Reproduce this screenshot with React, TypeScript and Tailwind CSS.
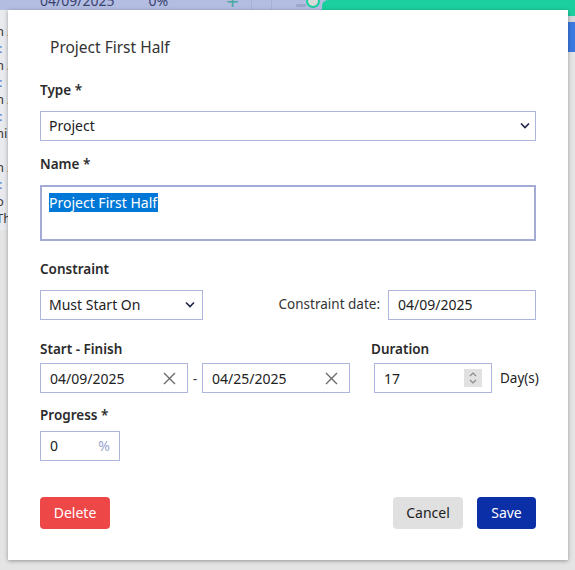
import React from 'react';

const font = { fontFamily: '"Segoe UI", "Noto Sans", "Open Sans", sans-serif' };

const Chevron = () => (
    <svg width="10" height="7" viewBox="0 0 10 7" className="shrink-0">
        <path d="M1 1.5 L5 5.5 L9 1.5" fill="none" stroke="#1f2547" strokeWidth="1.6" />
    </svg>
);

const Clear = () => (
    <svg width="13" height="13" viewBox="0 0 13 13" className="shrink-0">
        <path d="M1 1 L12 12 M12 1 L1 12" fill="none" stroke="#6b6b6b" strokeWidth="1.4" />
    </svg>
);

const Label = ({ children, className = '' }: { children: React.ReactNode; className?: string }) => (
    <div className={`text-[13.5px] font-semibold text-[#2b2b2b] leading-none ${className}`}>{children}</div>
);

// greyed-out gantt chart that sits under the modal backdrop
const Backdrop = () => (
    <div className="absolute inset-0 bg-[#e4e4e4]">
        <div className="flex items-center h-[10px] bg-[#b2bde1] text-[14px] text-[#3a4270] overflow-hidden whitespace-nowrap">
            <span className="ml-[40px] leading-none -mt-[8px]">04/09/2025</span>
            <span className="ml-[34px] leading-none -mt-[8px]">0%</span>
            <span className="ml-[58px] text-[#4ea9a0] text-[22px] leading-none -mt-[10px]">+</span>
            <span className="ml-[12px] w-px h-full bg-[#a6b1d4]" />
            <span className="ml-[19px] w-px h-full bg-[#a6b1d4]" />
            <span className="ml-[24px] w-[10px] h-[3px] bg-[#9aa6cc] rounded" />
            <span className="w-[14px] h-[14px] -mt-[8px] rounded-full bg-[#d9d9d9] border-2 border-[#1ccf9f]" />
            <span className="ml-[2px] flex-1 h-[16px] self-start bg-[#1ccf9f] rounded-l-[6px]" />
        </div>
        <div className="flex">
            <div className="w-[8px] h-[220px] bg-[#e9eaee] overflow-hidden text-[13px] leading-[17px] whitespace-nowrap">
                <div className="-ml-[4px] pt-[13px] text-[#3b3b3b]">
                    <div>n A</div>
                    <div className="ml-[3px] text-[#3e7bd6]">:</div>
                    <div>n A</div>
                    <div className="ml-[3px] text-[#3e7bd6]">:</div>
                    <div>n A</div>
                    <div className="ml-[3px] text-[#3e7bd6]">:</div>
                    <div>ni</div>
                    <div>&nbsp;</div>
                    <div>n A</div>
                    <div className="ml-[3px] text-[#3e7bd6]">:</div>
                    <div>o</div>
                    <div>Th</div>
                </div>
            </div>
            <div className="flex-1" />
            <div className="w-[7px] flex flex-col">
                <div className="h-[6px] bg-[#1ccf9f]" />
                <div className="h-[6px] bg-[#d4d6da]" />
                <div className="h-[30px] bg-[#3b78e0]" />
            </div>
        </div>
    </div>
);

const App: React.FC = () => {
    return (
        <div className="relative w-[575px] h-[570px] overflow-hidden" style={font}>
            <Backdrop />

            <div className="absolute left-[8px] top-[10px] w-[560px] h-[550px] bg-white shadow-[0_1px_4px_rgba(0,0,0,0.35)] px-[32px] text-[#222]">
                <h2 className="mt-[28px] ml-[10px] text-[15.5px] leading-[18px] text-[#333] font-normal">Project First Half</h2>

                <Label className="mt-[28px]">Type *</Label>
                <div className="mt-[13px] flex items-center justify-between h-[30px] border border-[#adb5dc] pl-[8px] pr-[5px] text-[14px]">
                    <span>Project</span>
                    <Chevron />
                </div>

                <Label className="mt-[17px]">Name *</Label>
                <div className="mt-[14px] h-[56px] border-2 border-[#a3aad3] pl-[7px] pt-[5px] text-[14px]">
                    <span className="bg-[#0078d7] text-white leading-[19px] inline-block pr-[1px]">Project First Half</span>
                </div>

                <Label className="mt-[22px]">Constraint</Label>
                <div className="mt-[13px] flex items-center">
                    <div className="w-[163px] flex items-center justify-between h-[30px] border border-[#adb5dc] pl-[8px] pr-[7px] text-[14px]">
                        <span>Must Start On</span>
                        <Chevron />
                    </div>
                    <span className="ml-auto mr-[8px] text-[13.5px] text-[#333]">Constraint date:</span>
                    <div className="w-[148px] h-[30px] flex items-center border border-[#adb5dc] pl-[9px] text-[14px]">04/09/2025</div>
                </div>

                <div className="mt-[23px] flex">
                    <div>
                        <Label>Start - Finish</Label>
                        <div className="mt-[7px] flex items-center">
                            <div className="w-[148px] h-[30px] flex items-center justify-between border border-[#adb5dc] pl-[9px] pr-[11px] text-[14px]">
                                <span>04/09/2025</span>
                                <Clear />
                            </div>
                            <span className="w-[14px] text-center text-[14px] text-[#444]">-</span>
                            <div className="w-[148px] h-[30px] flex items-center justify-between border border-[#adb5dc] pl-[9px] pr-[11px] text-[14px]">
                                <span>04/25/2025</span>
                                <Clear />
                            </div>
                        </div>
                    </div>
                    <div className="ml-[21px]">
                        <Label>Duration</Label>
                        <div className="mt-[7px] flex items-center">
                            <div className="ml-[3px] w-[118px] h-[30px] flex items-center justify-between border border-[#adb5dc] pl-[9px] pr-[9px] text-[14px]">
                                <span>17</span>
                                <div className="w-[18px] h-[18px] bg-[#e1e1e1] flex items-center justify-center">
                                    <svg width="10" height="14" viewBox="0 0 10 14">
                                        <path d="M2 5 L5 2 L8 5 M2 9 L5 12 L8 9" fill="none" stroke="#8a8a8a" strokeWidth="1.2" />
                                    </svg>
                                </div>
                            </div>
                            <span className="ml-[8px] text-[13.5px] text-[#222]">Day(s)</span>
                        </div>
                    </div>
                </div>

                <Label className="mt-[16px]">Progress *</Label>
                <div className="mt-[8px] w-[80px] h-[30px] flex items-center justify-between border border-[#adb5dc] pl-[9px] pr-[9px] text-[14px]">
                    <span>0</span>
                    <span className="text-[#9aa3d0]">%</span>
                </div>

                <div className="mt-[36px] flex items-center">
                    <button className="w-[70px] h-[32px] rounded-[4px] bg-[#ee4748] text-white text-[14px]">Delete</button>
                    <button className="ml-auto w-[70px] h-[32px] rounded-[4px] bg-[#e0e0e0] text-[#222] text-[14px]">Cancel</button>
                    <button className="ml-[14px] w-[59px] h-[32px] rounded-[4px] bg-[#0b2fa6] text-white text-[14px]">Save</button>
                </div>
            </div>
        </div>
    );
};

export default App;
